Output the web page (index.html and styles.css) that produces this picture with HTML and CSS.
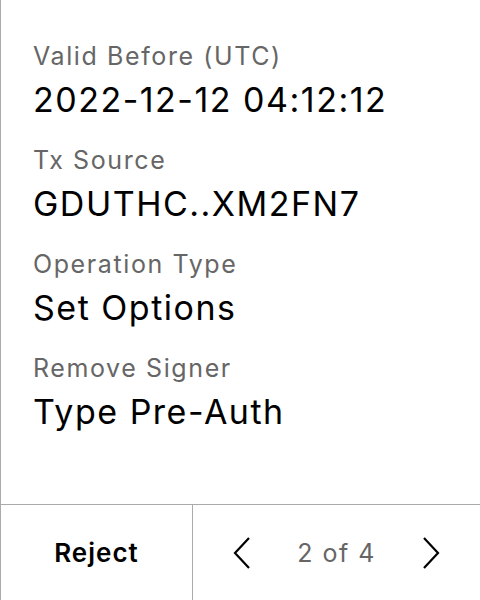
FILE: index.html
```html
<!DOCTYPE html>
<html>
<head>
<meta charset="utf-8">
<link rel="stylesheet" href="styles.css">
</head>
<body>
<div class="screen">
  <div class="details">
    <div class="field">
      <div class="label">Valid Before (UTC)</div>
      <div class="value">2022-12-12 04:12:12</div>
    </div>
    <div class="field">
      <div class="label">Tx Source</div>
      <div class="value">GDUTHC..XM2FN7</div>
    </div>
    <div class="field">
      <div class="label">Operation Type</div>
      <div class="value">Set Options</div>
    </div>
    <div class="field">
      <div class="label">Remove Signer</div>
      <div class="value">Type Pre-Auth</div>
    </div>
  </div>
  <div class="footer">
    <div class="reject">Reject</div>
    <div class="pager">
      <svg class="chev" width="18" height="34" viewBox="0 0 18 34"><polyline points="16,2 2,17 16,32" fill="none" stroke="#000" stroke-width="2.2"/></svg>
      <span class="count">2 of 4</span>
      <svg class="chev" width="18" height="34" viewBox="0 0 18 34"><polyline points="2,2 16,17 2,32" fill="none" stroke="#000" stroke-width="2.2"/></svg>
    </div>
  </div>
</div>
</body>
</html>
```

FILE: styles.css
```css
html, body {
  margin: 0;
  padding: 0;
  height: 100%;
  background: #fff;
}
body {
  font-family: Inter, "Noto Sans", sans-serif;
  color: #000;
}
.screen {
  height: 600px;
  display: flex;
  flex-direction: column;
  border-left: 1px solid #aaa;
  box-sizing: border-box;
}
.details {
  flex: 1;
  padding: 41px 0 0 32px;
  display: flex;
  flex-direction: column;
  gap: 25px;
}
.field {
  display: flex;
  flex-direction: column;
  gap: 8px;
}
.label {
  font-size: 25px;
  line-height: 31px;
  letter-spacing: 1.6px;
  color: #666;
}
.value {
  font-size: 34px;
  line-height: 40px;
  letter-spacing: 1.5px;
  color: #000;
}
.footer {
  height: 96px;
  box-sizing: border-box;
  border-top: 1px solid #aaa;
  display: flex;
}
.reject {
  width: 191px;
  border-right: 1px solid #aaa;
  display: flex;
  align-items: center;
  justify-content: center;
  font-size: 26px;
  font-weight: 600;
  letter-spacing: 1px;
  padding-bottom: 1px;
}
.pager {
  flex: 1;
  display: flex;
  align-items: center;
  justify-content: center;
  gap: 46px;
}
.count {
  font-size: 25px;
  letter-spacing: 1.5px;
  color: #666;
}
.chev {
  display: block;
}
```
